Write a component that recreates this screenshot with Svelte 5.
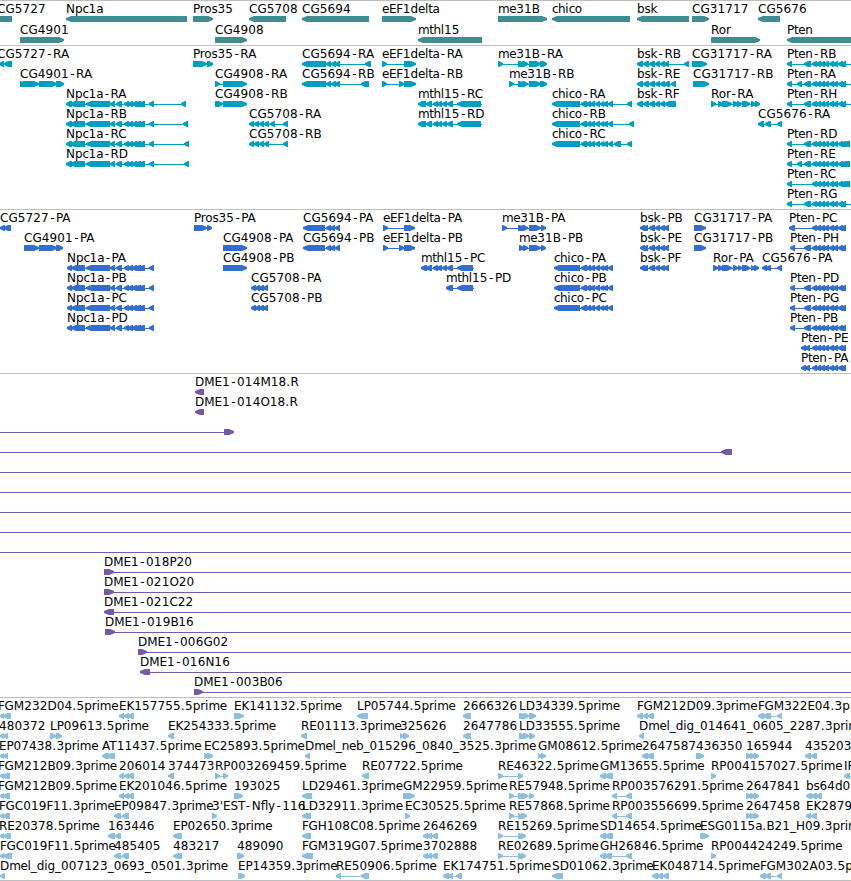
<script>
  const WIDTH = 851;

  // spacing correction after each character, in px
  const KERN = {
    '-': 1.5, '.': 0.4, c: -0.6, e: -0.5, t: -0.5, n: -0.2, o: -0.2, a: -0.5, h: -0.3,
    m: -0.4, p: -0.1, r: -0.2, s: -0.3, k: -0.3, g: -0.1, d: -0.1, b: -0.2, l: -0.1,
    E: -0.2, F: -0.4, P: -0.2, B: -0.3
  };

  // exon runs shared by several transcripts, as start:end pairs
  const npc1a = '86:110 110:115 116:122 124:129 128:133 132:137 135:141 139:145 149:154';
  const chico = '581:587 586:591 590:595 595:600 600:604 603:608 608:613';
  const pten = '812:817 816:821 820:825 824:829 829:834 833:838 838:843 841:846';
  const mthl15 = '426:432 433:438 437:442 442:447 447:453';

  // each feature is row, strand, label position, label, exons (and an optional line extent)
  const genes = [
    [0, '<', -3, 'CG5727', '-8:12'],
    [0, '<', 66, 'Npc1a', '66:187'],
    [0, '>', 193, 'Pros35', '193:213'],
    [0, '<', 249, 'CG5708', '249:286'],
    [0, '<', 302, 'CG5694', '302:369'],
    [0, '>', 382, 'eEF1delta', '382:416'],
    [0, '>', 498, 'me31B', '498:547'],
    [0, '<', 552, 'chico', '552:630'],
    [0, '<', 637, 'bsk', '637:689'],
    [0, '>', 692, 'CG31717', '692:709'],
    [0, '<', 758, 'CG5676', '758:780'],
    [1, '>', 20, 'CG4901', '20:64'],
    [1, '>', 215, 'CG4908', '215:247'],
    [1, '<', 418, 'mthl15', '418:482'],
    [1, '>', 711, 'Ror', '711:760'],
    [1, '<', 787, 'Pten', '787:860']
  ];

  const transcripts = [
    [0, '<', -3, 'CG5727-RA', '-1:4 4:12'],
    [0, '>', 193, 'Pros35-RA', '193:207 207:213'],
    [0, '<', 302, 'CG5694-RA', '302:326 326:331 331:336 335:340 365:371'],
    [0, '>', 382, 'eEF1delta-RA', '382:387 404:416'],
    [0, '>', 498, 'me31B-RA', '498:503 518:524 522:528 529:541 540:547'],
    [0, '<', 637, 'bsk-RB', '637:643 643:649 649:655 655:660 660:665 664:669 684:689'],
    [0, '>', 692, 'CG31717-RA', '692:707'],
    [0, '<', 787, 'Pten-RB', `787:792 804:811 ${pten}`, 860],
    [1, '>', 20, 'CG4901-RA', '20:25 23:39 39:57 56:64'],
    [1, '>', 215, 'CG4908-RA', '215:220 223:247'],
    [1, '<', 302, 'CG5694-RB', '302:326 326:331 331:336 335:340 361:369'],
    [1, '>', 382, 'eEF1delta-RB', '382:387 399:404 404:416'],
    [1, '>', 509, 'me31B-RB', '509:514 518:524 522:528 529:541 540:547'],
    [1, '<', 637, 'bsk-RE', '637:643 643:649 649:655 655:660 660:665 664:670 671:676'],
    [1, '>', 693, 'CG31717-RB', '693:709'],
    [1, '<', 787, 'Pten-RA', `787:792 797:802 804:811 ${pten}`, 860],
    [2, '<', 66, 'Npc1a-RA', `66:72 70:85 ${npc1a} 181:186`],
    [2, '>', 215, 'CG4908-RB', '215:223 223:247'],
    [2, '<', 418, 'mthl15-RC', `418:426 ${mthl15} 457:481`, 482],
    [2, '<', 552, 'chico-RA', `552:580 ${chico} 627:632`],
    [2, '<', 637, 'bsk-RF', '637:643 643:649 649:655 655:660 660:665 664:676'],
    [2, '>', 711, 'Ror-RA', '711:716 718:723 722:732 733:738 737:742 742:750 751:756 755:760'],
    [2, '<', 787, 'Pten-RH', `787:792 804:811 ${pten}`, 860],
    [3, '<', 66, 'Npc1a-RB', `66:72 70:85 ${npc1a} 183:188`],
    [3, '<', 249, 'CG5708-RA', '249:254 254:259 259:264 264:269 270:275 283:288'],
    [3, '<', 418, 'mthl15-RD', `418:426 ${mthl15} 457:481`, 482],
    [3, '<', 552, 'chico-RB', `552:580 ${chico} 629:634`],
    [3, '<', 758, 'CG5676-RA', '758:764 765:771 777:782'],
    [4, '<', 66, 'Npc1a-RC', `66:72 70:85 ${npc1a} 184:189`],
    [4, '<', 249, 'CG5708-RB', '249:254 254:259 259:264 264:269 283:288'],
    [4, '<', 552, 'chico-RC', `552:580 ${chico} 614:621 627:632`],
    [4, '<', 787, 'Pten-RD', `787:792 804:811 ${pten} 843:850`],
    [5, '<', 66, 'Npc1a-RD', `66:72 70:85 ${npc1a} 184:189`],
    [5, '<', 787, 'Pten-RE', `787:792 797:802 804:811 ${pten} 843:850`],
    [6, '<', 787, 'Pten-RC', `787:792 ${pten} 843:850`],
    [7, '<', 787, 'Pten-RG', `787:792 804:811 ${pten}`, 860]
  ];

  const proteins = [
    [0, '<', 0, 'CG5727-PA', '0:5 4:11'],
    [0, '>', 194, 'Pros35-PA', '194:207 207:212'],
    [0, '<', 303, 'CG5694-PA', '303:325 326:331 330:335 335:340'],
    [0, '>', 383, 'eEF1delta-PA', '383:388 404:415'],
    [0, '>', 502, 'me31B-PA', '502:507 518:524 522:528 529:541 541:546'],
    [0, '<', 640, 'bsk-PB', '640:645 643:648 649:655 655:660 660:665 664:669'],
    [0, '>', 694, 'CG31717-PA', '694:706'],
    [0, '<', 789, 'Pten-PC', `789:795 ${pten}`],
    [1, '>', 24, 'CG4901-PA', '24:39 39:57 56:63'],
    [1, '>', 223, 'CG4908-PA', '223:247'],
    [1, '<', 303, 'CG5694-PB', '303:325 326:331 330:335 335:340'],
    [1, '>', 383, 'eEF1delta-PB', '383:388 399:404 404:415'],
    [1, '>', 519, 'me31B-PB', '519:524 523:528 529:541 541:546'],
    [1, '<', 640, 'bsk-PE', '640:645 643:648 649:655 655:660 660:665 664:669'],
    [1, '>', 694, 'CG31717-PB', '694:706'],
    [1, '<', 790, 'Pten-PH', `790:795 804:811 ${pten}`],
    [2, '<', 67, 'Npc1a-PA', `67:72 71:85 ${npc1a}`],
    [2, '>', 223, 'CG4908-PB', '223:247'],
    [2, '<', 421, 'mthl15-PC', `421:427 ${mthl15} 457:473`, 474],
    [2, '<', 554, 'chico-PA', `554:580 ${chico}`],
    [2, '<', 640, 'bsk-PF', '640:645 643:648 649:655 655:660 660:665 664:669'],
    [2, '>', 713, 'Ror-PA', '713:718 718:723 722:732 733:738 738:742 742:750 751:755 754:759'],
    [2, '<', 762, 'CG5676-PA', '762:767 766:771 777:782'],
    [3, '<', 67, 'Npc1a-PB', `67:72 71:85 ${npc1a}`],
    [3, '<', 251, 'CG5708-PA', '251:256 255:260 259:264 263:268'],
    [3, '<', 446, 'mthl15-PD', '446:453 457:473', 474],
    [3, '<', 554, 'chico-PB', `554:580 ${chico}`],
    [3, '<', 790, 'Pten-PD', `790:795 804:811 ${pten}`],
    [4, '<', 67, 'Npc1a-PC', `67:72 71:85 ${npc1a}`],
    [4, '<', 251, 'CG5708-PB', '251:256 255:260 259:264 263:268'],
    [4, '<', 554, 'chico-PC', `554:580 ${chico}`],
    [4, '<', 790, 'Pten-PG', `790:795 804:811 ${pten}`],
    [5, '<', 67, 'Npc1a-PD', `67:72 71:85 ${npc1a}`],
    [5, '<', 790, 'Pten-PB', `790:795 804:811 ${pten}`],
    [6, '<', 801, 'Pten-PE', `801:806 805:810 ${pten}`],
    [7, '<', 801, 'Pten-PA', `801:806 805:810 ${pten}`]
  ];

  const clones = [
    [0, '<', 195, 'DME1-014M18.R', '195:204'],
    [1, '<', 195, 'DME1-014O18.R', '195:204'],
    [2, '>', 0, '', '-20:-10 224:234'],
    [3, '<', 0, '', '-20:-10 721:732'],
    [4, '>', 0, '', '-20:-10', 860],
    [5, '>', 0, '', '-20:-10', 860],
    [6, '>', 0, '', '-20:-10', 860],
    [7, '>', 0, '', '-20:-10', 860],
    [8, '>', 0, '', '-20:-10', 860],
    [9, '>', 104, 'DME1-018P20', '104:114', 860],
    [10, '>', 104, 'DME1-021O20', '104:114', 860],
    [11, '<', 104, 'DME1-021C22', '104:114', 860],
    [12, '>', 105, 'DME1-019B16', '105:115', 860],
    [13, '>', 138, 'DME1-006G02', '138:147', 860],
    [14, '<', 140, 'DME1-016N16', '140:150', 860],
    [15, '>', 194, 'DME1-003B06', '194:203', 860]
  ];

  const ests = [
    [0, '<', -2, 'FGM232D04.5prime', '0:4 3:11'],
    [0, '<', 119, 'EK157755.5prime', '119:124 124:129 128:134'],
    [0, '>', 234, 'EK141132.5prime', '234:244'],
    [0, '<', 357, 'LP05744.5prime', '357:368'],
    [0, '<', 463, '2666326', '463:471'],
    [0, '>', 519, 'LD34339.5prime', '519:525 523:529 529:536'],
    [0, '<', 637, 'FGM212D09.3prime', '637:643 643:648 648:654'],
    [0, '<', 758, 'FGM322E04.3prime', '758:764 763:771 777:782'],
    [1, '<', -1, '480372', '0:4 3:8'],
    [1, '>', 50, 'LP09613.5prime', '50:56 56:62'],
    [1, '<', 168, 'EK254333.5prime', '168:174'],
    [1, '<', 301, 'RE01113.3prime', '301:307'],
    [1, '>', 400, '325626', '400:404 403:409'],
    [1, '<', 463, '2647786', '463:471'],
    [1, '>', 519, 'LD33555.5prime', '519:525 523:529 529:535'],
    [1, '<', 639, 'Dmel_dig_014641_0605_2287.3prime', '639:644'],
    [2, '<', -1, 'EP07438.3prime', '0:4 3:8'],
    [2, '<', 102, 'AT11437.5prime', '102:109 107:115'],
    [2, '>', 204, 'EC25893.5prime', '204:209 207:213'],
    [2, '<', 305, 'Dmel_neb_015296_0840_3525.3prime', '305:310'],
    [2, '>', 538, 'GM08612.5prime', '538:542 541:546'],
    [2, '<', 642, '2647587', '642:648 647:654'],
    [2, '>', 696, '436350', '696:704'],
    [2, '>', 746, '165944', '746:751 750:755 754:759'],
    [2, '<', 805, '435203', '805:811 811:817'],
    [3, '<', -2, 'FGM212B09.3prime', '0:4 3:10'],
    [3, '<', 119, '206014', '119:124 124:129 128:134'],
    [3, '<', 168, '374473', '168:174'],
    [3, '>', 215, 'RP003269459.5prime', '215:220 223:228'],
    [3, '<', 362, 'RE07722.5prime', '362:369'],
    [3, '>', 498, 'RE46322.5prime', '498:503 518:523'],
    [3, '<', 600, 'GM13655.5prime', '600:606 605:613'],
    [3, '>', 711, 'RP004157027.5prime', '711:716'],
    [3, '<', 844, 'IP', '844:850', 860],
    [4, '<', -2, 'FGM212B09.5prime', '0:4 3:10'],
    [4, '<', 119, 'EK201046.5prime', '119:124 124:129 128:134'],
    [4, '>', 234, '193025', '234:243'],
    [4, '<', 302, 'LD29461.3prime', '302:312'],
    [4, '>', 403, 'GM22959.5prime', '403:415'],
    [4, '>', 509, 'RE57948.5prime', '509:514 518:524 522:528 529:534'],
    [4, '<', 612, 'RP003576291.5prime', '612:617 626:632'],
    [4, '>', 746, '2647841', '746:751 750:755 754:759'],
    [4, '<', 806, 'bs64d08', '806:812 811:817 816:822'],
    [5, '<', -1, 'FGC019F11.3prime', '0:4 3:10'],
    [5, '<', 114, 'EP09847.3prime', '114:121 122:129'],
    [5, '>', 212, "3'EST-Nfly-116", '212:217'],
    [5, '<', 302, 'LD32911.3prime', '302:311'],
    [5, '>', 405, 'EC30525.5prime', '405:410'],
    [5, '>', 509, 'RE57868.5prime', '509:514 518:523 521:527'],
    [5, '<', 612, 'RP003556699.5prime', '612:617 626:632'],
    [5, '>', 746, '2647458', '746:751 750:755 754:759'],
    [5, '<', 806, 'EK287961', '806:811 811:817'],
    [6, '<', -1, 'RE20378.5prime', '0:4 3:11'],
    [6, '<', 108, '163446', '108:115 115:121'],
    [6, '<', 173, 'EP02650.3prime', '173:182'],
    [6, '<', 302, 'FGH108C08.5prime', '302:311'],
    [6, '<', 423, '2646269', '423:428 427:432 432:438'],
    [6, '>', 498, 'RE15269.5prime', '498:503 518:523 521:526'],
    [6, '<', 600, 'SD14654.5prime', '600:606 605:613'],
    [6, '>', 700, 'ESG0115a.B21_H09.3prime', '700:709'],
    [7, '<', 0, 'FGC019F11.5prime', '0:4 3:12'],
    [7, '<', 114, '485405', '114:121 122:129'],
    [7, '<', 173, '483217', '173:182'],
    [7, '>', 237, '489090', '237:244'],
    [7, '<', 302, 'FGM319G07.5prime', '302:313'],
    [7, '<', 423, '3702888', '423:428 427:432 432:438'],
    [7, '>', 498, 'RE02689.5prime', '498:503 518:523 521:526'],
    [7, '<', 600, 'GH26846.5prime', '600:606 605:612 626:632'],
    [7, '>', 711, 'RP004424249.5prime', '711:716'],
    [8, '<', 0, 'Dmel_dig_007123_0693_0501.3prime', '0:5'],
    [8, '>', 238, 'EP14359.3prime', '238:245'],
    [8, '<', 336, 'RE50906.5prime', '336:341 361:369'],
    [8, '<', 443, 'EK174751.5prime', '443:449 448:453 456:462'],
    [8, '<', 552, 'SD01062.3prime', '552:563'],
    [8, '<', 652, 'EK048714.5prime', '652:658 657:663 663:669'],
    [8, '<', 760, 'FGM302A03.5prime', '760:766 765:771 777:782']
  ];

  const tracks = [
    { name: 'genes', height: 44, step: 21, features: genes },
    { name: 'transcripts', height: 163, step: 20, features: transcripts },
    { name: 'proteins', height: 163, step: 20, features: proteins },
    { name: 'clones', height: 323, step: 20, features: clones },
    { name: 'ests', height: 182, step: 20, features: ests }
  ];

  const parse = (exons) => exons.split(' ').map((e) => e.split(':').map(Number));

  // short exons get a blunt head, long ones a 5px head
  const arrow = (start, end, strand, y) => {
    const head = end - start < 9 ? 4 : 5;
    if (strand === '<') {
      return `M${start} ${y + 2}L${start + head} ${y}H${end}V${y + 6}H${start + head}L${start} ${y + 4}Z`;
    }
    return `M${start} ${y}H${end - head}L${end} ${y + 2}V${y + 4}L${end - head} ${y + 6}H${start}Z`;
  };

  // everything is wound clockwise so that overlapping pieces stay filled
  const line = (row, exons, extent, step) => {
    const y = 18 + row * step;
    const blocks = parse(exons);
    const end = extent || blocks[blocks.length - 1][1];
    return `M${blocks[0][0]} ${y}H${end}V${y + 1}H${blocks[0][0]}Z`;
  };

  const heads = (row, strand, exons, step) =>
    parse(exons).map(([a, b]) => arrow(a, b, strand, 15 + row * step)).join('');

  const spacing = (label) => [...label].map((c, i) => {
    if (i === 0) return 0;
    const prev = label[i - 1];
    const after = /\d/.test(prev) ? 0.12 : KERN[prev] || 0;
    return (after + (c === '-' ? 1.5 : 0)).toFixed(2);
  }).join(' ');
</script>

<div class="browser">
  {#each tracks as track}
    <section class="track {track.name}">
      <svg width={WIDTH} height={track.height}>
        {#each track.features as [row, strand, x, label, exons, extent]}
          <path class="line" d={line(row, exons, extent, track.step)} />
          <path d={heads(row, strand, exons, track.step)} />
          {#if label}
            <text {x} y={12 + row * track.step} dx={spacing(label)}>{label}</text>
          {/if}
        {/each}
      </svg>
    </section>
  {/each}
</div>

<style>
  :global(body) {
    background: #fff;
  }

  .browser {
    width: 851px;
    overflow: hidden;
    border-bottom: 1px solid #bebebe;
  }

  .track {
    border-top: 1px solid #bebebe;
  }

  svg {
    display: block;
    overflow: hidden;
  }

  text {
    font-family: 'DejaVu Sans', sans-serif;
    font-size: 12px;
    fill: #000;
  }

  .line {
    shape-rendering: crispEdges;
  }

  .genes path {
    fill: #408c91;
  }

  .transcripts path {
    fill: #009fc0;
  }

  .proteins path {
    fill: #326ecf;
  }

  .clones path {
    fill: #7459a8;
  }

  .ests path {
    fill: #8abfdf;
  }
</style>
